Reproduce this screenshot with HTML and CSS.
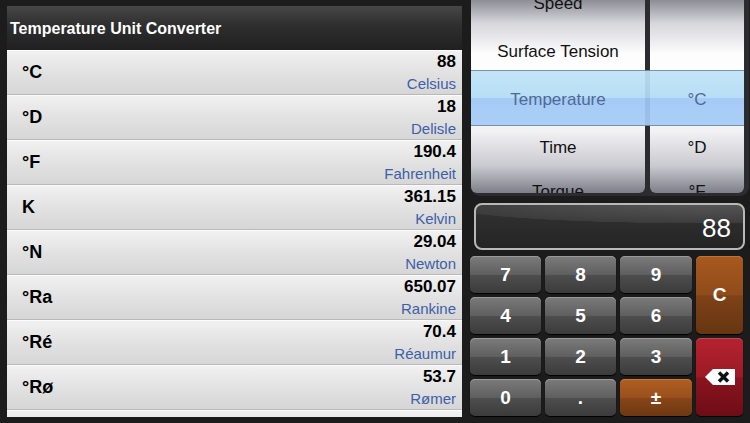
FILE: index.html
```html
<!DOCTYPE html>
<html lang="en">
<head>
    <meta charset="UTF-8">
    <title>Temperature Unit Converter</title>
    <link rel="stylesheet" href="styles.css">
</head>

<body>

    <div class="m_app">
        <div class="m_list">
            <div class="m_head">Temperature Unit Converter</div>
            <ul class="m_rows">
                <li class="m_row"><span class="m_sym">°C</span><span class="m_val"><b>88</b><em>Celsius</em></span></li>
                <li class="m_row"><span class="m_sym">°D</span><span class="m_val"><b>18</b><em>Delisle</em></span></li>
                <li class="m_row"><span class="m_sym">°F</span><span class="m_val"><b>190.4</b><em>Fahrenheit</em></span></li>
                <li class="m_row"><span class="m_sym">K</span><span class="m_val"><b>361.15</b><em>Kelvin</em></span></li>
                <li class="m_row"><span class="m_sym">°N</span><span class="m_val"><b>29.04</b><em>Newton</em></span></li>
                <li class="m_row"><span class="m_sym">°Ra</span><span class="m_val"><b>650.07</b><em>Rankine</em></span></li>
                <li class="m_row"><span class="m_sym">°Ré</span><span class="m_val"><b>70.4</b><em>Réaumur</em></span></li>
                <li class="m_row"><span class="m_sym">°Rø</span><span class="m_val"><b>53.7</b><em>Rømer</em></span></li>
                <li class="m_row"></li>
            </ul>
        </div>

        <div class="m_side">
            <div class="m_picker">
                <div class="m_wheel m_wheel_kind">
                    <div class="m_item">Speed</div>
                    <div class="m_item">Surface Tension</div>
                    <div class="m_item m_item_on">Temperature</div>
                    <div class="m_item">Time</div>
                    <div class="m_item">Torque</div>
                </div>
                <div class="m_wheel m_wheel_unit">
                    <div class="m_item"></div>
                    <div class="m_item"></div>
                    <div class="m_item m_item_on">°C</div>
                    <div class="m_item">°D</div>
                    <div class="m_item">°F</div>
                </div>
                <div class="m_bar"></div>
            </div>

            <div class="m_display"><span>88</span></div>

            <div class="m_keys">
                <button class="m_key">7</button>
                <button class="m_key">8</button>
                <button class="m_key">9</button>
                <button class="m_key m_key_clear">C</button>
                <button class="m_key">4</button>
                <button class="m_key">5</button>
                <button class="m_key">6</button>
                <button class="m_key">1</button>
                <button class="m_key">2</button>
                <button class="m_key">3</button>
                <button class="m_key m_key_del">
                    <svg width="32" height="18" viewBox="0 0 32 18">
                        <path d="M1 9 L9 1 H31 V17 H9 Z" fill="#fff"/>
                        <path d="M15 4.5 L24 13.5 M24 4.5 L15 13.5" stroke="#111" stroke-width="3.4"/>
                    </svg>
                </button>
                <button class="m_key">0</button>
                <button class="m_key">.</button>
                <button class="m_key m_key_sign">±</button>
            </div>
        </div>
    </div>

</body>
</html>
```

FILE: styles.css
```css
* {margin: 0;padding: 0;box-sizing: border-box;}
body {background: #1c1c1c; font-family: "Liberation Sans", Arial, sans-serif; width: 750px; height: 423px; overflow: hidden;}

.m_app {display: flex; height: 423px;}

/* left list */
.m_list {width: 455px; margin: 6px 0 0 7px; height: 411px; overflow: hidden; display: flex; flex-direction: column;}
.m_head {height: 44px; flex: none; padding: 14px 0 0 3px; color: #fff; font-size: 16px; font-weight: bold; background: linear-gradient(#474747, #2e2e2e 45%, #202020);}
.m_rows {list-style: none; flex: 1; overflow: hidden;}
.m_row {height: 45px; display: flex; align-items: center; justify-content: space-between; padding: 0 6px 0 15px; background: linear-gradient(#f1f1f1, #e2e2e2 50%, #d6d6d6); border-top: 1px solid #fbfbfb; border-bottom: 1px solid #b9b9b9;}
.m_sym {font-size: 18px; font-weight: bold; color: #000;}
.m_val {display: flex; flex-direction: column; align-items: flex-end; line-height: 22px; padding-top: 1px;}
.m_val b {font-size: 17px; color: #000;}
.m_val em {font-style: normal; font-size: 15px; color: #3d5fa8;}

/* right side */
.m_side {width: 280px; margin-left: 8px; display: flex; flex-direction: column;}

.m_picker {position: relative; display: flex; gap: 5px; width: 278px; height: 196px; margin-left: 1px; padding: 0 5px 3px 0; background: #2c2c30; border-radius: 0 0 9px 9px;}
.m_wheel {height: 193px; overflow: hidden; background: linear-gradient(#8d8d96, #d6d6dc 12%, #fdfdfd 28%, #fff 50%, #f2f2f4 68%, #c9c9d0 86%, #7e7e88); border-radius: 0 0 6px 6px;}
.m_wheel_kind {width: 174px;}
.m_wheel_unit {width: 94px;}
.m_item {height: 48px; display: flex; align-items: center; justify-content: center; font-size: 17px; color: #111;}
.m_item:first-child {margin-top: -20px;}
.m_item:last-child {margin-top: -4px;}
.m_item_on {color: #4d6a95; position: relative; z-index: 2;}
.m_bar {position: absolute; left: 0; right: 5px; top: 70px; height: 56px; background: linear-gradient(#c0e4f8, #b2dcf6 50%, #9fc7f6 51%, #a6cdf6); border-top: 1px solid #6f8aa6; border-bottom: 1px solid #6f8aa6; opacity: 0.93; z-index: 1;}

.m_display {height: 47px; margin: 7px 5px 6px 4px; border: 2px solid #b8b8b8; border-radius: 8px; background: radial-gradient(ellipse 160% 70% at 85% 0%, #565656 0, #3c3c3c 60%, transparent 61%), linear-gradient(#333, #242424); display: flex; align-items: center; justify-content: flex-end; padding-right: 12px;}
.m_display span {color: #fff; font-size: 26px; margin-top: 4px;}

.m_keys {display: grid; grid-template-columns: 71px 71px 72px 47px; grid-template-rows: repeat(4, 37px); gap: 4px; width: 273px;}
.m_key {border: none; outline: none; border-radius: 5px; color: #fff; font-family: "Liberation Sans", Arial, sans-serif; font-size: 19px; font-weight: bold; background: linear-gradient(#7b7b7b, #5f5f5f 50%, #4e4e4e 51%, #3b3b3b); box-shadow: inset 0 1px 0 #9a9a9a, 0 1px 1px #000; display: flex; align-items: center; justify-content: center;}
.m_key_clear {grid-row: 1 / 3; grid-column: 4; background: linear-gradient(#a9591f, #8f4b1a 50%, #7e4216 51%, #673512); box-shadow: inset 0 1px 0 #c47438, 0 1px 1px #000;}
.m_key_del {grid-row: 3 / 5; grid-column: 4; background: linear-gradient(#b4232f, #9c1a26 50%, #8a1420 51%, #6e0d17); box-shadow: inset 0 1px 0 #cc4450, 0 1px 1px #000;}
.m_key_sign {background: linear-gradient(#b05e22, #9a501c 50%, #884518 51%, #6e3812); box-shadow: inset 0 1px 0 #c8783a, 0 1px 1px #000;}
```
